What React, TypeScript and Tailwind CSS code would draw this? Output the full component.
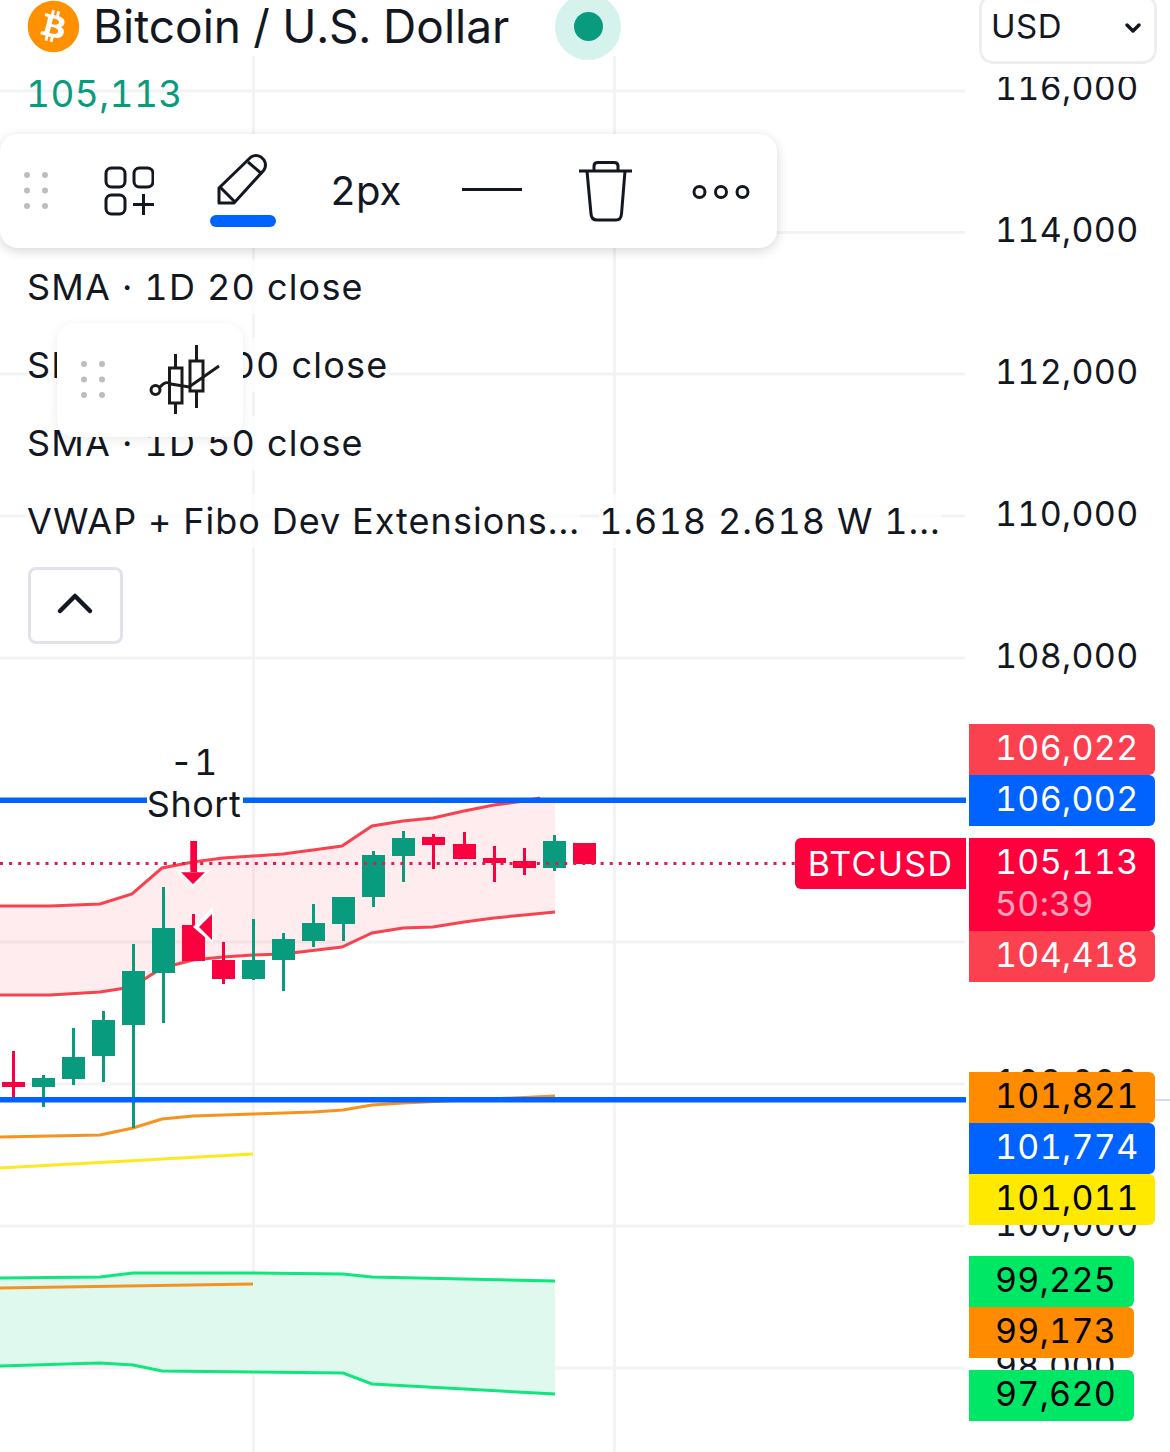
import { FaBitcoin } from "react-icons/fa";

type Candle = [number, number, number, number, number, "r" | "g"];

const RED = "#f9003f";
const GREEN = "#089b7d";

const candles: Candle[] = [
  [13.5, 1051, 1098, 1082, 1087, "r"],
  [43.5, 1075, 1107, 1078, 1087, "g"],
  [73.5, 1028, 1085, 1057, 1079, "g"],
  [103.5, 1011, 1082, 1020, 1056, "g"],
  [133.5, 944, 1128, 971, 1025, "g"],
  [163.5, 887, 1023, 928, 973, "g"],
  [193.5, 914, 961, 925, 961, "r"],
  [223.5, 942, 984, 960, 979, "r"],
  [253.5, 919, 980, 960, 979, "g"],
  [283.5, 933, 991, 939, 960, "g"],
  [313.5, 904, 947, 923, 941, "g"],
  [343.5, 897, 941, 897, 924, "g"],
  [373.5, 851, 907, 855, 897, "g"],
  [403.5, 831, 882, 838, 856, "g"],
  [433.5, 834, 869, 837, 845, "r"],
  [464.5, 832, 859, 844, 859, "r"],
  [494.5, 846, 882, 858, 863, "r"],
  [524.5, 848, 875, 861, 868, "r"],
  [554.5, 835, 871, 841, 868, "g"],
  [584.5, 843, 864, 843, 864, "r"],
];

const upperRed = "0,906 50,906 100,904 132,894 162,868 193,862 223,858 253,856 283,854 313,850 342,846 372,826 403,821 433,818 464,811 494,805 524,801 540,798";
const lowerRed = "555,912 524,915 494,918 464,922 433,927 403,928 372,933 342,947 300,952 283,954 253,955 223,957 193,960 162,968 132,987 100,992 50,995 0,995";
const upperGreen = "0,1278 100,1277 133,1273 253,1273 343,1274 372,1277 555,1281";
const lowerGreen = "555,1394 372,1384 343,1373 253,1372 162,1371 133,1365 100,1363 0,1366";
const orange = "0,1137 100,1135 133,1128 162,1119 193,1116 253,1114 313,1112 343,1110 372,1105 403,1103 555,1096";

const gridY = [91, 232.5, 374, 516, 658, 942, 1084, 1226, 1368];
const axisLabels = [
  ["116,000", 61],
  ["114,000", 203],
  ["112,000", 345],
  ["110,000", 487],
  ["108,000", 629],
  ["102,000", 1055],
  ["100,000", 1197],
  ["98,000", 1339],
] as const;

const tags = [
  { text: "106,022", top: 724, bg: "bg-[#fb404f] text-white", wide: true },
  { text: "106,002", top: 775, bg: "bg-[#0062ff] text-white", wide: true },
  { text: "104,418", top: 931, bg: "bg-[#fb404f] text-white", wide: true },
  { text: "101,821", top: 1072, bg: "bg-[#ff8c00] text-black", wide: true },
  { text: "101,774", top: 1123, bg: "bg-[#0062ff] text-white", wide: true },
  { text: "101,011", top: 1174, bg: "bg-[#ffe900] text-black", wide: true },
  { text: "99,225", top: 1256, bg: "bg-[#00e765] text-black", wide: false },
  { text: "99,173", top: 1307, bg: "bg-[#ff8c00] text-black", wide: false },
  { text: "97,620", top: 1370, bg: "bg-[#00e765] text-black", wide: false },
];

function DragDots({ className }: { className: string }) {
  return (
    <svg className={className} viewBox="0 0 26 42" fill="#bdbdbd">
      {[4, 22].map((x) =>
        [5, 20.5, 36].map((y) => <circle key={`${x}-${y}`} cx={x} cy={y} r="3" />),
      )}
    </svg>
  );
}

function Chart() {
  return (
    <svg className="absolute inset-0 w-[1170px] h-[1452px]" viewBox="0 0 1170 1452" fill="none">
      {gridY.map((y) => (
        <line key={y} x1="0" x2="965" y1={y} y2={y} stroke="#f2f3f4" strokeWidth="3" />
      ))}
      <line x1="253.5" x2="253.5" y1="56" y2="1452" stroke="#f2f3f4" strokeWidth="3" />
      <line x1="614.5" x2="614.5" y1="56" y2="1452" stroke="#f2f3f4" strokeWidth="3" />
      <line x1="1155" x2="1170" y1="1100" y2="1100" stroke="#bcd3fb" strokeWidth="1.5" />

      <polygon points={`${upperRed} 555,798 ${lowerRed}`} fill="#fb2f45" fillOpacity="0.09" />
      <polyline points={upperRed} stroke="#f7434f" strokeWidth="3" />
      <polyline points={lowerRed} stroke="#f7434f" strokeWidth="3" />

      <polygon points={`${upperGreen} ${lowerGreen}`} fill="#dff9ee" />
      <polyline points={upperGreen} stroke="#0fe67c" strokeWidth="3" />
      <polyline points={lowerGreen} stroke="#0fe67c" strokeWidth="3" />
      <line x1="0" x2="253" y1="1288" y2="1284" stroke="#f6931f" strokeWidth="3" />

      <polyline points={orange} stroke="#f6931f" strokeWidth="3" />
      <line x1="0" x2="253" y1="1168" y2="1154" stroke="#ffe81f" strokeWidth="3" />

      {candles.map(([x, wt, wb, bt, bb, c]) => (
        <g key={x} fill={c === "r" ? RED : GREEN}>
          <rect x={x - 1.5} y={wt} width="3" height={wb - wt} />
          <rect x={x - 11.5} y={bt} width="23" height={bb - bt} />
        </g>
      ))}

      <line x1="0" x2="795" y1="863.5" y2="863.5" stroke="#e8174d" strokeWidth="3" strokeDasharray="3 6.1" />

      <rect x="190.5" y="841" width="6.5" height="30" fill={RED} />
      <polygon points="178,871 208,871 193,886" fill={RED} stroke="#ffffff" strokeWidth="2.5" />
      <rect x="190.5" y="841" width="6.5" height="31" fill={RED} />
      <polygon points="193,927 213,907 213,944" fill="#ffffff" />
      <polygon points="199,927 212,914 212,940" fill={RED} />

      <rect x="0" y="797.5" width="966" height="5.5" fill="#0062ff" />
      <rect x="0" y="1097" width="966" height="5.5" fill="#0062ff" />
      <rect x="147" y="796" width="96" height="8" fill="#ffffff" />
    </svg>
  );
}

export default function App() {
  return (
    <div className="relative w-[1170px] h-[1452px] overflow-hidden bg-white font-[Inter,sans-serif] text-[#131722] tabular-nums">
      <Chart />

      <div className="relative flex flex-col pl-[27px]">
        <div className="flex items-center h-[53px]">
          <FaBitcoin className="w-[53px] h-[53px] text-[#ff9000]" />
          <span className="ml-[13px] text-[46px] leading-[53px] whitespace-nowrap">Bitcoin / U.S. Dollar</span>
          <span className="ml-[46px] w-[66px] h-[66px] rounded-full bg-[#d5f2ec] flex items-center justify-center shrink-0">
            <span className="w-[29px] h-[29px] rounded-full bg-[#089b7d]" />
          </span>
        </div>
        <div className="h-[82px] -ml-[1px] flex items-center text-[37px] text-[#089b7d] tracking-[0.4px]">105,113</div>

        <div className="mt-[113px] flex flex-col text-[36px] tracking-[1.2px]">
          <div className="h-[78px] flex items-center"><span className="bg-white/70">SMA · 1D 20 close</span></div>
          <div className="h-[78px] flex items-center"><span className="bg-white/70">SMA · 1D 100 close</span></div>
          <div className="h-[78px] flex items-center"><span className="bg-white/70">SMA · 1D 50 close</span></div>
          <div className="h-[78px] flex items-center gap-[19px] whitespace-nowrap tracking-[1.05px]">
            <span className="bg-white/70">VWAP + Fibo Dev Extensions...</span>
            <span className="bg-white/70">1.618 2.618 W 1...</span>
          </div>
        </div>
        <button className="mt-[7px] ml-[1px] w-[95px] h-[77px] border-[3px] border-[#e0e3eb] rounded-[8px] bg-white flex items-center justify-center">
          <svg className="w-[38px] h-[24px] -mt-[5px] -ml-[2px]" viewBox="0 0 38 24" fill="none" stroke="#131722" strokeWidth="4.5" strokeLinecap="round" strokeLinejoin="round">
            <path d="M4 20 L19 5 L34 20" />
          </svg>
        </button>
      </div>

      {/* Floating drawing toolbar */}
      <div className="absolute left-0 top-[134px] w-[777px] h-[114px] rounded-[18px] bg-white shadow-[0_3px_12px_rgba(0,0,0,0.16)] flex items-center text-[#131722]">
        <DragDots className="ml-[23px] w-[26px] h-[42px] shrink-0" />
        <svg className="ml-[55px] w-[50px] h-[50px] shrink-0" viewBox="104 166 50 50" fill="none" stroke="currentColor" strokeWidth="3">
          <rect x="106" y="168" width="19" height="19" rx="5.5" />
          <rect x="134" y="168" width="19" height="19" rx="5.5" />
          <rect x="106" y="195" width="19" height="19" rx="5.5" />
          <path d="M143.5 194 V215 M133 204.5 H154" />
        </svg>
        <div className="ml-[56px] w-[66px] flex flex-col items-center shrink-0 -mt-[2px]">
          <svg className="w-[52px] h-[52px]" viewBox="218 153 52 52" fill="none" stroke="currentColor" strokeWidth="3" strokeLinejoin="round">
            <path d="M220 203 V188 L252 157 Q257 154 262 157 L265 160 Q268 165 265 170 L235 203 Z" />
            <path d="M221 187 L236 202 M249 162 L263 174" />
          </svg>
          <div className="mt-[10px] w-[66px] h-[12px] rounded-full bg-[#0062ff]" />
        </div>
        <span className="ml-[54px] w-[72px] text-[40px] leading-none whitespace-nowrap shrink-0">2px</span>
        <div className="ml-[60px] w-[60px] h-[3px] bg-[#131722] shrink-0 -mt-[4px]" />
        <svg className="ml-[56px] w-[56px] h-[62px] shrink-0" viewBox="578 160 56 62" fill="none" stroke="currentColor" strokeWidth="3" strokeLinejoin="round">
          <path d="M579 171 H632" />
          <path d="M594 171 V166 Q594 162.5 598 162.5 H614 Q618 162.5 618 166 V171" />
          <path d="M587 171 L591 214 Q591.500 220 597 220 H616 Q621 220 621.500 214 L625 171" />
        </svg>
        <svg className="ml-[57px] w-[60px] h-[16px] shrink-0 mt-[2px]" viewBox="0 0 60 16" fill="none" stroke="currentColor" strokeWidth="3">
          <circle cx="8.500" cy="8" r="5.500" />
          <circle cx="30" cy="8" r="5.500" />
          <circle cx="51.500" cy="8" r="5.500" />
        </svg>
      </div>

      {/* Floating chart type toolbar */}
      <div className="absolute left-[57px] top-[323px] w-[186px] h-[114px] rounded-[18px] bg-white shadow-[0_3px_12px_rgba(0,0,0,0.08)] flex items-center">
        <DragDots className="ml-[23px] w-[26px] h-[42px] shrink-0" />
        <svg className="ml-[43px] w-[74px] h-[74px] shrink-0" viewBox="149 342 74 74" fill="none" stroke="#1a1a1a" strokeWidth="3">
          <circle cx="155.500" cy="389" r="4.500" />
          <path d="M160 386 C165 380 168 381 171 383 L189 386 L219 365" />
          <path d="M175.500 353 V367 M175.500 402 V413" />
          <rect x="169.500" y="367" width="12.500" height="35" />
          <path d="M196.500 344 V360 M196.500 390 V407" />
          <rect x="190" y="360" width="13" height="30" />
        </svg>
      </div>

      {/* Price axis */}
      {axisLabels.map(([label, top]) => (
        <div
          key={label}
          className="absolute left-[995px] h-[52px] flex items-center text-[34px] tracking-[0.3px] whitespace-nowrap"
          style={{ top }}
        >
          {label}
        </div>
      ))}

      {tags.map((t) => (
        <div
          key={t.text}
          className={`absolute left-[969px] h-[46px] flex items-center pl-[26px] text-[34px] tracking-[0.3px] rounded-r-[6px] box-content pb-[5px] ${t.wide ? "w-[160px]" : "w-[139px]"} ${t.bg}`}
          style={{ top: t.top }}
        >
          {t.text}
        </div>
      ))}

      <div className="absolute left-[969px] top-[838px] w-[186px] h-[93px] rounded-r-[6px] bg-[#ff003c] text-white flex flex-col pl-[26px] text-[34px] tracking-[0.3px]">
        <span className="h-[46px] flex items-center">105,113</span>
        <span className="h-[38px] flex items-center text-white/65">50:39</span>
      </div>

      <div className="absolute left-[795px] top-[838px] w-[171px] h-[51px] rounded-l-[6px] bg-[#ff003c] text-white flex items-center justify-center text-[34px] tracking-[1.3px]">
        BTCUSD
      </div>

      {/* Currency select */}
      <div className="absolute left-[969px] top-0 w-[201px] h-[77px] bg-white pl-[10px]">
        <div className="w-[178px] h-[70px] -mt-[6px] border-[3px] border-[#eeeeee] rounded-[14px] flex items-center justify-between pl-[9px] pr-[12px] text-[33px] tracking-[0.5px]">
          <span className="-mt-[5px]">USD</span>
          <svg className="w-[18px] h-[12px] -mt-[2px]" viewBox="0 0 18 12" fill="none" stroke="#131722" strokeWidth="3.500" strokeLinecap="round" strokeLinejoin="round">
            <path d="M3 3 L9 9 L15 3" />
          </svg>
        </div>
      </div>

      {/* Signal marker */}
      <div className="absolute left-[134px] top-[741px] w-[120px] flex flex-col items-center text-[36px] leading-[42px] tracking-[0.5px]">
        <span className="tracking-[1px]">-1</span>
        <span>Short</span>
      </div>
    </div>
  );
}
